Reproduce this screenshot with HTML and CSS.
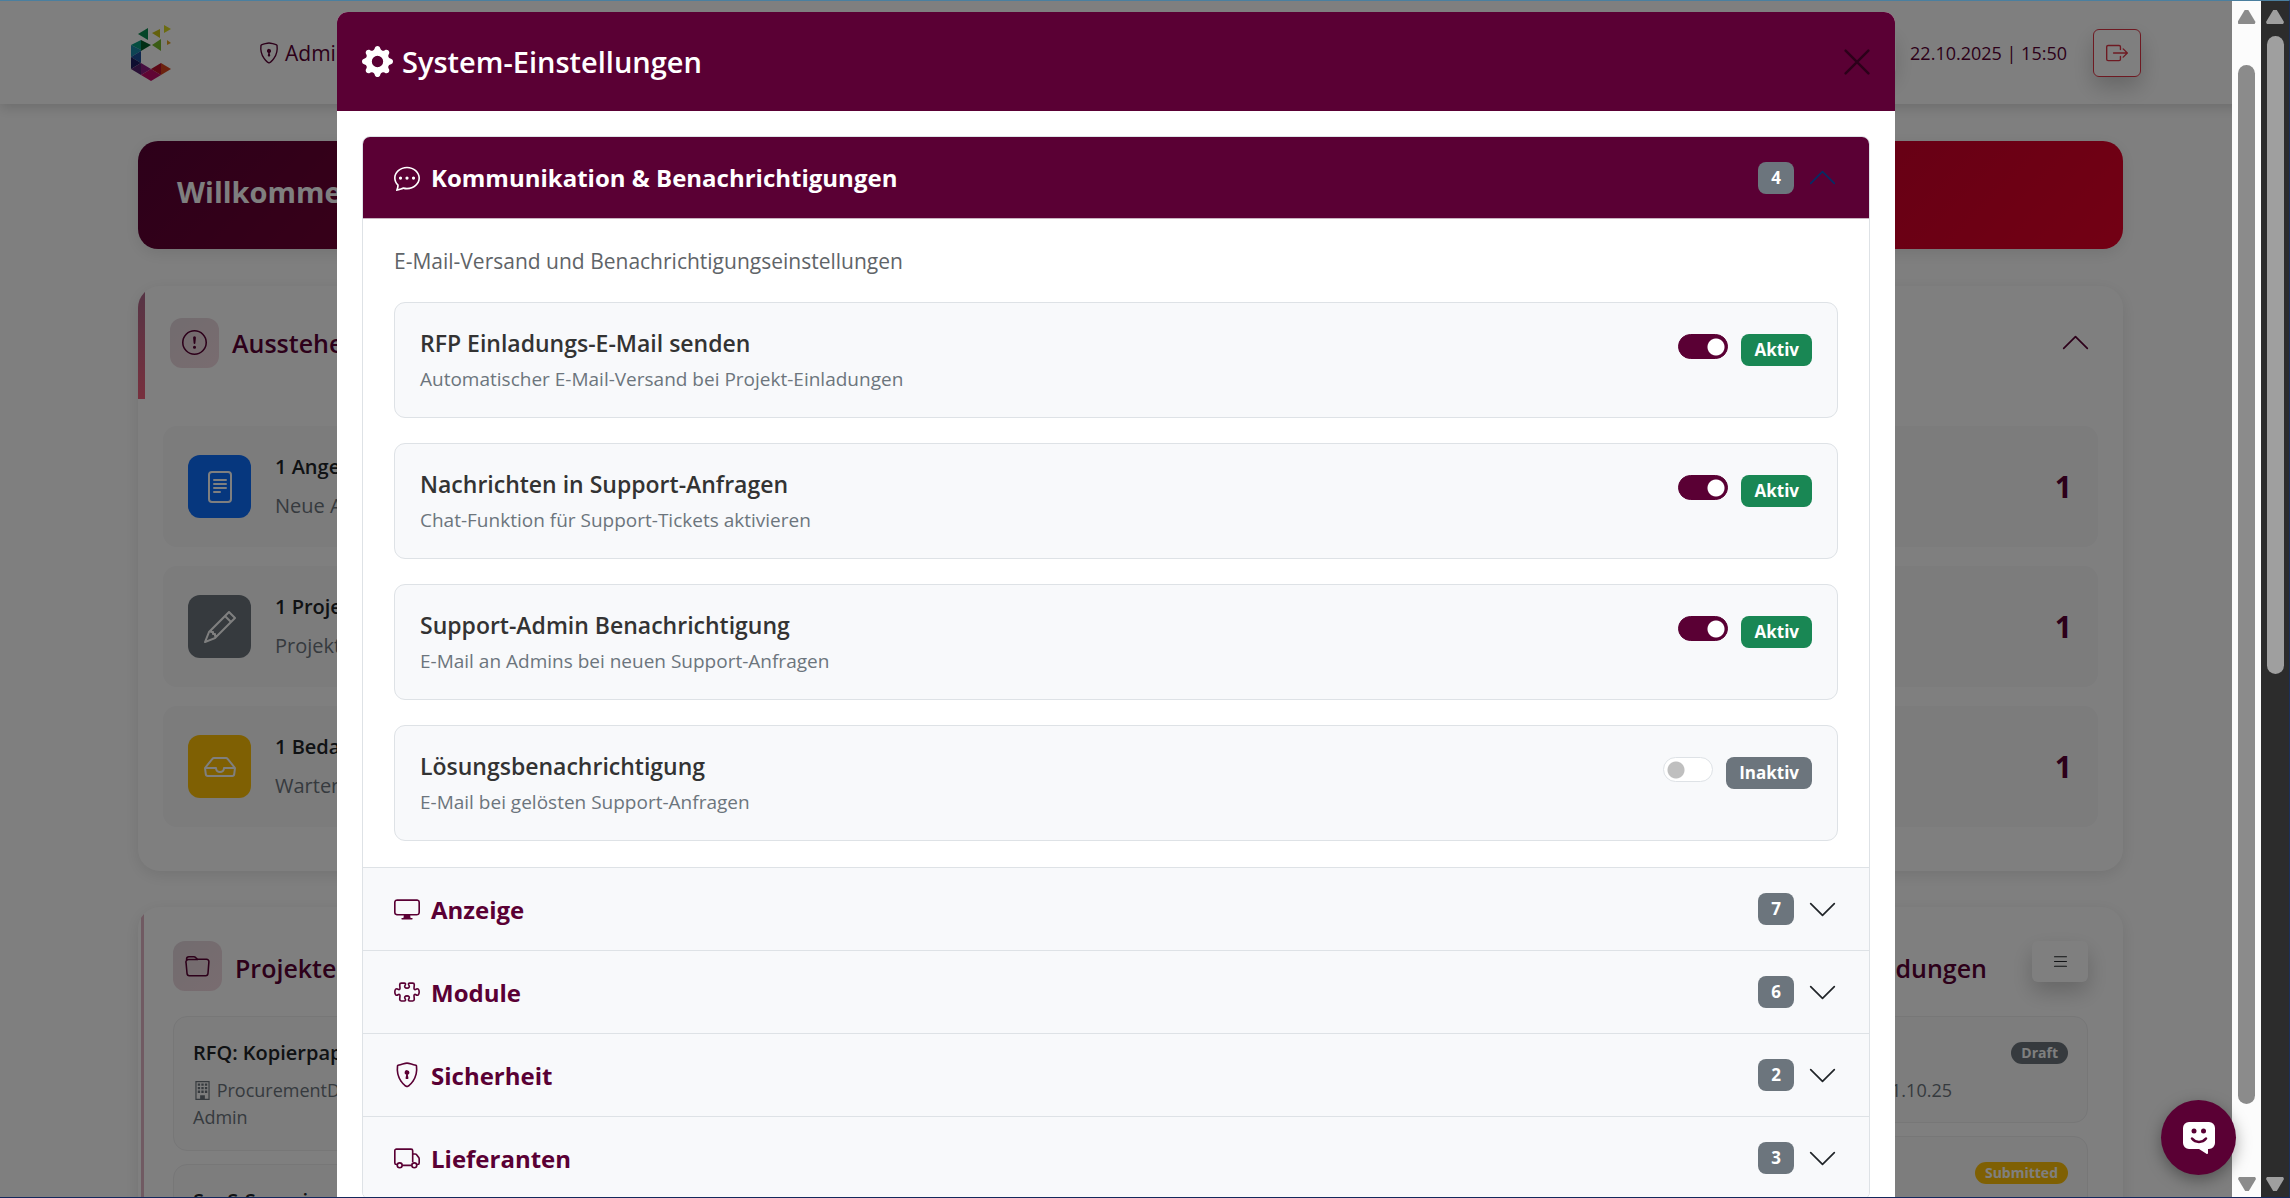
FILE: index.html
```
<!DOCTYPE html>
<html lang="de">
<head>
    <meta charset="UTF-8">
    <title>System-Einstellungen</title>
    <link rel="stylesheet" href="styles.css">
</head>
<body>
    <svg class="icon-defs" aria-hidden="true">
        <symbol id="shield-lock" viewBox="0 0 16 16">
            <path fill="none" stroke="currentColor" d="M5.338 1.2a61 61 0 0 0-2.837.856.48.48 0 0 0-.328.39c-.554 4.157.726 7.4 2.253 9.5a10.7 10.7 0 0 0 2.287 2.5c.346.244.652.42.893.533q.18.085.394.143.2-.058.394-.143c.24-.113.547-.29.893-.533a10.7 10.7 0 0 0 2.287-2.5c1.527-2.1 2.807-5.343 2.253-9.5a.48.48 0 0 0-.328-.39c-.651-.213-1.75-.56-2.837-.855C9.552.9 8.531.7 8 .7c-.53 0-1.552.2-2.662.5z"/>
            <path d="M9.5 6.5a1.5 1.5 0 0 1-1 1.415l.385 1.99a.5.5 0 0 1-.491.595h-.788a.5.5 0 0 1-.49-.595l.384-1.99a1.5 1.5 0 1 1 2-1.415"/>
        </symbol>
        <symbol id="chevron" viewBox="0 0 16 16">
            <path fill="none" stroke="currentColor" stroke-linecap="round" stroke-linejoin="round" d="m1 4.500 7 7 7-7"/>
        </symbol>
    </svg>

    <div class="browser">
        <div class="page-area">
            <div class="page">
                <header class="navbar">
                    <svg class="logo" viewBox="0 0 40 56">
                        <path fill="#0b8a50" d="M7 9 17 3v12z"/>
                        <path fill="#c9c21a" d="m21 8 8-4v9z"/>
                        <path fill="#d8d820" d="M33 0v8l7-4z"/>
                        <path fill="#e0a020" d="M36 15v5l4-2z"/>
                        <path fill="#76b82a" d="m21 20 9-6v12z"/>
                        <path fill="#0a9a80" d="m0 20 10-5v10z"/>
                        <path fill="#005c28" d="m10 15 10 5-10 6z"/>
                        <path fill="#1a88a8" d="M0 20v12l10-6v-1z"/>
                        <path fill="#1c4f98" d="m0 32 10-6v12z"/>
                        <path fill="#1c1c60" d="M0 32v12l10-6z"/>
                        <path fill="#54206c" d="m0 44 10-6v12z"/>
                        <path fill="#8c1c80" d="m10 38 10 6-10 6z"/>
                        <path fill="#c00a68" d="m10 50 10-6 10 6-10 6z"/>
                        <path fill="#b8102c" d="m20 44 10-6v12z"/>
                        <path fill="#d8451c" d="m30 38 10 6-10 6z"/>
                    </svg>
                    <a class="nav-link" href="#"><svg class="icon-sm"><use href="#shield-lock"/></svg>Admin</a>
                    <span class="nav-user"></span>
                    <span class="nav-date">22.10.2025 | 15:50</span>
                    <button class="logout" aria-label="Abmelden">
                        <svg viewBox="0 0 16 16"><path d="M10 12.5a.5.5 0 0 1-.5.5h-8a.5.5 0 0 1-.5-.5v-9a.5.5 0 0 1 .5-.5h8a.5.5 0 0 1 .5.5v2a.5.5 0 0 0 1 0v-2A1.5 1.5 0 0 0 9.500 2h-8A1.500 1.500 0 0 0 0 3.500v9A1.500 1.500 0 0 0 1.500 14h8a1.500 1.500 0 0 0 1.500-1.500v-2a.5.5 0 0 0-1 0z"/><path d="M15.854 8.354a.5.5 0 0 0 0-.708l-3-3a.5.5 0 0 0-.708.708L14.293 7.500H5.500a.5.5 0 0 0 0 1h8.793l-2.147 2.146a.5.5 0 0 0 .708.708z"/></svg>
                    </button>
                </header>

                <main class="content">
                    <section class="welcome"><h1>Willkommen</h1></section>

                    <section class="card pending">
                        <div class="pending-header">
                            <span class="tile tile-light">
                                <svg viewBox="0 0 16 16"><circle cx="8" cy="8" r="7.500" fill="none" stroke="currentColor"/><path d="M7.002 11a1 1 0 1 1 2 0 1 1 0 0 1-2 0M7.100 4.995a.905.905 0 1 1 1.800 0l-.35 3.507a.552.552 0 0 1-1.100 0z"/></svg>
                            </span>
                            <h2>Ausstehende</h2>
                            <svg class="chevron up push"><use href="#chevron"/></svg>
                        </div>
                        <div class="pending-list">
                            <div class="pending-item">
                                <span class="tile tile-blue">
                                    <svg viewBox="0 0 16 16"><rect x="2.500" y=".5" width="11" height="15" rx="1.500" fill="none" stroke="currentColor"/><path stroke="currentColor" stroke-linecap="round" d="M5 4.500h6M5 6.500h6M5 8.500h6M5 10.500h3"/></svg>
                                </span>
                                <div><h3>1 Angebot</h3><p>Neue Angebote</p></div>
                                <strong>1</strong>
                            </div>
                            <div class="pending-item">
                                <span class="tile tile-gray">
                                    <svg viewBox="0 0 16 16"><path d="M12.146.146a.5.5 0 0 1 .708 0l3 3a.5.5 0 0 1 0 .708l-10 10a.5.5 0 0 1-.168.11l-5 2a.5.5 0 0 1-.65-.65l2-5a.5.5 0 0 1 .11-.168zM11.207 2.500 13.500 4.793 14.793 3.500 12.500 1.207zm1.586 3L10.500 3.207 4 9.707V10h.5a.5.5 0 0 1 .5.5v.5h.5a.5.5 0 0 1 .5.5v.5h.293zm-9.761 5.175-.106.106-1.528 3.821 3.821-1.528.106-.106A.5.5 0 0 1 5 12.500V12h-.5a.5.5 0 0 1-.5-.5V11h-.5a.5.5 0 0 1-.468-.325"/></svg>
                                </span>
                                <div><h3>1 Projekt</h3><p>Projekte</p></div>
                                <strong>1</strong>
                            </div>
                            <div class="pending-item">
                                <span class="tile tile-yellow">
                                    <svg viewBox="0 0 16 16"><path d="M4.980 4a.5.5 0 0 0-.39.188L1.540 8H6a.5.5 0 0 1 .5.5 1.500 1.500 0 1 0 3 0A.5.5 0 0 1 10 8h4.460l-3.050-3.812A.5.5 0 0 0 11.020 4zm9.954 5H10.450a2.500 2.500 0 0 1-4.900 0H1.066l.32 2.562a.5.5 0 0 0 .497.438h12.234a.5.5 0 0 0 .496-.438zM3.809 3.563A1.500 1.500 0 0 1 4.981 3h6.038a1.500 1.500 0 0 1 1.172.563l3.700 4.625a.5.5 0 0 1 .105.374l-.39 3.124A1.500 1.500 0 0 1 14.117 13H1.883a1.500 1.500 0 0 1-1.489-1.314l-.39-3.124a.5.5 0 0 1 .106-.374z"/></svg>
                                </span>
                                <div><h3>1 Bedarf</h3><p>Wartend</p></div>
                                <strong>1</strong>
                            </div>
                        </div>
                    </section>

                    <div class="columns">
                        <section class="card projects">
                            <div class="column-header">
                                <span class="tile tile-light">
                                    <svg viewBox="0 0 16 16"><path fill="none" stroke="currentColor" d="M1.100 4.500 1 3.200A1.500 1.500 0 0 1 2.500 1.700h3.200a1.500 1.500 0 0 1 1.100.5l.7.700a1.500 1.500 0 0 0 1.100.500h5.200a1.500 1.500 0 0 1 1.500 1.600l-.6 7.500a1.500 1.500 0 0 1-1.500 1.400H2.800a1.500 1.500 0 0 1-1.500-1.400L.7 5.800a1.700 1.700 0 0 1 1.600-2.300h6"/></svg>
                                </span>
                                <h2>Projekte</h2>
                            </div>
                            <div class="entry">
                                <h3>RFQ: Kopierpapier</h3>
                                <p><svg class="icon-xs" viewBox="0 0 16 16"><path fill="none" stroke="currentColor" d="M2.500.5h11v15h-11z"/><path d="M4 2h2v2H4zm3 0h2v2H7zm3 0h2v2h-2zM4 5h2v2H4zm3 0h2v2H7zm3 0h2v2h-2zM4 8h2v2H4zm3 0h2v2H7zm3 0h2v2h-2zM6 12h4v4H6z"/></svg> ProcurementD<br>Admin</p>
                            </div>
                            <div class="entry">
                                <h3>SaaS-Scanni</h3>
                            </div>
                        </section>
                        <section class="card invitations">
                            <div class="column-header">
                                <h2>Einladungen</h2>
                                <button class="menu-button" aria-label="Menü">
                                    <svg viewBox="0 0 16 16"><path stroke="currentColor" stroke-linecap="round" d="M3 4h10M3 8h10M3 12h10"/></svg>
                                </button>
                            </div>
                            <div class="entry entry-status">
                                <span class="pill pill-gray">Draft</span>
                                <p>21.10.25</p>
                            </div>
                            <div class="entry entry-status">
                                <span class="pill pill-yellow">Submitted</span>
                            </div>
                        </section>
                    </div>
                </main>
            </div>

            <div class="overlay">
                <div class="backdrop">
                    <div class="modal" role="dialog" aria-labelledby="modal-title">
                        <div class="modal-header">
                            <svg class="gear" viewBox="0 0 16 16"><path d="M9.405 1.050c-.413-1.400-2.397-1.400-2.810 0l-.1.34a1.464 1.464 0 0 1-2.105.872l-.31-.17c-1.283-.698-2.686.705-1.987 1.987l.169.311c.446.82.023 1.841-.872 2.105l-.34.1c-1.400.413-1.400 2.397 0 2.810l.34.1a1.464 1.464 0 0 1 .872 2.105l-.17.31c-.698 1.283.705 2.686 1.987 1.987l.311-.169a1.464 1.464 0 0 1 2.105.872l.1.34c.413 1.400 2.397 1.400 2.810 0l.1-.34a1.464 1.464 0 0 1 2.105-.872l.31.17c1.283.698 2.686-.705 1.987-1.987l-.169-.311a1.464 1.464 0 0 1 .872-2.105l.34-.1c1.400-.413 1.400-2.397 0-2.810l-.34-.1a1.464 1.464 0 0 1-.872-2.105l.17-.31c.698-1.283-.705-2.686-1.987-1.987l-.311.169a1.464 1.464 0 0 1-2.105-.872zM8 10.930a2.929 2.929 0 1 1 0-5.860 2.929 2.929 0 0 1 0 5.858z"/></svg>
                            <h2 id="modal-title">System-Einstellungen</h2>
                            <button class="close" aria-label="Schließen">
                                <svg viewBox="0 0 16 16"><path stroke="currentColor" stroke-width="1.500" stroke-linecap="round" d="m1 1 14 14M15 1 1 15"/></svg>
                            </button>
                        </div>
                        <div class="modal-body">
                            <div class="accordion">
                                <button class="accordion-button open">
                                    <svg class="icon" viewBox="0 0 16 16"><path d="M5 8a1 1 0 1 1-2 0 1 1 0 0 1 2 0m4 0a1 1 0 1 1-2 0 1 1 0 0 1 2 0m3 1a1 1 0 1 0 0-2 1 1 0 0 0 0 2"/><path d="m2.165 15.803.02-.004c1.830-.363 2.948-.842 3.468-1.105A9 9 0 0 0 8 15c4.418 0 8-3.134 8-7s-3.582-7-8-7-8 3.134-8 7c0 1.760.743 3.370 1.970 4.600a10.400 10.400 0 0 1-.524 2.318l-.003.011a11 11 0 0 1-.244.637c-.079.186.074.394.273.362a22 22 0 0 0 .693-.125m.8-3.108a1 1 0 0 0-.287-.801C1.618 10.830 1 9.468 1 8c0-3.192 3.004-6 7-6s7 2.808 7 6-3.004 6-7 6a8 8 0 0 1-2.088-.272 1 1 0 0 0-.711.074c-.387.196-1.240.57-2.634.893a11 11 0 0 0 .398-2"/></svg>
                                    <span>Kommunikation &amp; Benachrichtigungen</span>
                                    <span class="badge">4</span>
                                    <svg class="chevron up"><use href="#chevron"/></svg>
                                </button>
                                <div class="accordion-body">
                                    <p class="intro">E-Mail-Versand und Benachrichtigungseinstellungen</p>
                                    <div class="setting">
                                        <div class="setting-text">
                                            <label for="rfp-mail">RFP Einladungs-E-Mail senden</label>
                                            <p>Automatischer E-Mail-Versand bei Projekt-Einladungen</p>
                                        </div>
                                        <input class="switch" id="rfp-mail" type="checkbox" checked>
                                        <span class="badge badge-active">Aktiv</span>
                                    </div>
                                    <div class="setting">
                                        <div class="setting-text">
                                            <label for="support-chat">Nachrichten in Support-Anfragen</label>
                                            <p>Chat-Funktion für Support-Tickets aktivieren</p>
                                        </div>
                                        <input class="switch" id="support-chat" type="checkbox" checked>
                                        <span class="badge badge-active">Aktiv</span>
                                    </div>
                                    <div class="setting">
                                        <div class="setting-text">
                                            <label for="support-admin">Support-Admin Benachrichtigung</label>
                                            <p>E-Mail an Admins bei neuen Support-Anfragen</p>
                                        </div>
                                        <input class="switch" id="support-admin" type="checkbox" checked>
                                        <span class="badge badge-active">Aktiv</span>
                                    </div>
                                    <div class="setting">
                                        <div class="setting-text">
                                            <label for="solution-mail">Lösungsbenachrichtigung</label>
                                            <p>E-Mail bei gelösten Support-Anfragen</p>
                                        </div>
                                        <input class="switch" id="solution-mail" type="checkbox">
                                        <span class="badge">Inaktiv</span>
                                    </div>
                                </div>
                                <button class="accordion-button">
                                    <svg class="icon" viewBox="0 0 16 16"><path d="M0 4s0-2 2-2h12s2 0 2 2v6s0 2-2 2h-4q0 1 .25 1.500H11a.5.5 0 0 1 0 1H5a.5.5 0 0 1 0-1h.75Q6 13 6 12H2s-2 0-2-2zm1.398-.855a.76.76 0 0 0-.254.302A1.500 1.500 0 0 0 1 4.010V10c0 .325.078.502.145.602q.105.156.302.254a1.500 1.500 0 0 0 .538.143L2.010 11H14c.325 0 .502-.078.602-.145a.76.76 0 0 0 .254-.302 1.500 1.500 0 0 0 .143-.538L15 9.990V4c0-.325-.078-.502-.145-.602a.76.76 0 0 0-.302-.254A1.500 1.500 0 0 0 13.990 3H2c-.325 0-.502.078-.602.145"/></svg>
                                    <span>Anzeige</span>
                                    <span class="badge">7</span>
                                    <svg class="chevron"><use href="#chevron"/></svg>
                                </button>
                                <button class="accordion-button">
                                    <svg class="icon" viewBox="0 0 16 16"><path fill="none" stroke="currentColor" d="M6.300 2.500H4.500a1 1 0 0 0-1 1l.2 2.200c0 .8-.6 1-1.200.6C1.400 5.500.5 6.400.5 8s.9 2.500 2 1.700c.6-.4 1.200-.2 1.200.6l-.2 2.200a1 1 0 0 0 1 1h1.800c.8 0 1-.6.6-1.200C6.100 11.200 6.800 10.400 8 10.400s1.900.8 1.100 1.900c-.4.6-.2 1.200.6 1.200h1.800a1 1 0 0 0 1-1l-.2-2.200c0-.8.6-1 1.200-.6 1.100.8 2-.1 2-1.700s-.9-2.500-2-1.700c-.6.4-1.200.2-1.200-.6l.2-2.200a1 1 0 0 0-1-1H9.700c-.8 0-1 .6-.6 1.200C9.900 4.800 9.200 5.600 8 5.600S6.100 4.800 6.900 3.700c.4-.6.2-1.200-.6-1.200z"/></svg>
                                    <span>Module</span>
                                    <span class="badge">6</span>
                                    <svg class="chevron"><use href="#chevron"/></svg>
                                </button>
                                <button class="accordion-button">
                                    <svg class="icon"><use href="#shield-lock"/></svg>
                                    <span>Sicherheit</span>
                                    <span class="badge">2</span>
                                    <svg class="chevron"><use href="#chevron"/></svg>
                                </button>
                                <button class="accordion-button">
                                    <svg class="icon" viewBox="0 0 16 16"><g fill="none" stroke="currentColor"><path d="M2 12h-.5a1 1 0 0 1-1-1V3.500a1 1 0 0 1 1-1h9a1 1 0 0 1 1 1v7M5 12.500h6M11.500 5.500H13a1 1 0 0 1 .8.4l1.500 1.900.2.700V11a1 1 0 0 1-1 1H14"/><circle cx="3.500" cy="12.500" r="1.500"/><circle cx="12.500" cy="12.500" r="1.500"/></g></svg>
                                    <span>Lieferanten</span>
                                    <span class="badge">3</span>
                                    <svg class="chevron"><use href="#chevron"/></svg>
                                </button>
                            </div>
                        </div>
                    </div>
                </div>
                <div class="scrollbar scrollbar-light">
                    <i class="arrow"></i><i class="thumb"></i><i class="arrow down"></i>
                </div>
            </div>

            <button class="chat-button" aria-label="Chat">
                <svg viewBox="0 0 32 32"><path fill="#fff" d="M6 0h20a6 6 0 0 1 6 6v15a6 6 0 0 1-6 6h-1v4a1 1 0 0 1-1.600.8L16 27H6a6 6 0 0 1-6-6V6a6 6 0 0 1 6-6z"/><circle cx="11" cy="9" r="2.500"/><circle cx="20.500" cy="9" r="2.500"/><path fill="none" stroke="currentColor" stroke-width="2.500" stroke-linecap="round" d="M9 16.500c3.500 4.500 10.500 4.500 14 0"/></svg>
            </button>
        </div>

        <div class="scrollbar scrollbar-dark">
            <i class="arrow"></i><i class="thumb"></i><i class="arrow down"></i>
        </div>
    </div>
</body>
</html>
```

FILE: styles.css
```
* {
    box-sizing: border-box;
}

body {
    margin: 0;
    overflow: hidden;
    background-color: #ffffff;
    color: #212529;
    font-family: "Segoe UI", "Open Sans", "Noto Sans", sans-serif;
    font-size: 20px;
    line-height: 32px;
}

h1, h2, h3, p {
    margin: 0;
    font-size: inherit;
}

button {
    font-family: inherit;
    cursor: pointer;
}

svg {
    display: block;
    flex: none;
    fill: currentColor;
}

.icon-defs {
    position: absolute;
    width: 0;
    height: 0;
}

.browser {
    display: flex;
    height: 100vh;
    overflow: hidden;
    border-top: 1px solid #4a7f9f;
    border-right: 1px solid #1c2f5c;
    border-bottom: 1px solid #14285c;
}

.page-area {
    position: relative;
    flex: 1;
    min-width: 0;
    overflow: hidden;
}

/* Header */
.navbar {
    display: flex;
    align-items: center;
    height: 103px;
    padding: 0 120px 0 131px;
    box-shadow: 0 4px 12px rgba(0, 0, 0, 0.15);
    color: #5a0034;
}

.logo {
    width: 40px;
    height: 56px;
}

.nav-link {
    display: flex;
    align-items: center;
    gap: 5px;
    margin-left: 87px;
    color: inherit;
    font-size: 21px;
    text-decoration: none;
}

.icon-sm {
    width: 22px;
    height: 22px;
}

.nav-user {
    width: 200px;
    height: 46px;
    margin-left: auto;
    border-radius: 8px;
    box-shadow: 0 8px 20px rgba(0, 0, 0, 0.15);
}

.nav-date {
    margin: 0 26px 0 14px;
    font-size: 18px;
}

.logout {
    width: 48px;
    height: 48px;
    padding: 12px;
    border: 1px solid #dc3545;
    border-radius: 6px;
    background: none;
    box-shadow: 0 10px 22px rgba(0, 0, 0, 0.2);
    color: #dc3545;
}

/* Dashboard */
.content {
    padding: 37px 138px 0;
}

.welcome {
    padding: 31px 39px 37px;
    border-radius: 20px;
    background: linear-gradient(135deg, #5a0034, #e60028);
    box-shadow: 0 4px 16px rgba(0, 0, 0, 0.1);
    color: #ffffff;
}

.welcome h1 {
    font-size: 29px;
    line-height: 40px;
}

.card {
    border-radius: 22px;
    box-shadow: 0 4px 16px rgba(0, 0, 0, 0.1);
    overflow: hidden;
}

.card h2 {
    color: #5a0034;
    font-size: 25px;
    font-weight: 600;
}

.pending {
    margin-top: 37px;
    padding-bottom: 44px;
}

.pending-header {
    display: flex;
    align-items: center;
    gap: 13px;
    height: 113px;
    padding: 0 34px 0 25px;
    border-left: 7px solid;
    border-image: linear-gradient(#a86a8c, #f0607c) 1;
    color: #5a0034;
}

.tile {
    display: flex;
    align-items: center;
    justify-content: center;
    flex: none;
    width: 63px;
    height: 63px;
    border-radius: 12px;
    color: #ffffff;
}

.tile svg {
    width: 32px;
    height: 32px;
}

.tile-light {
    width: 49px;
    height: 50px;
    background: linear-gradient(135deg, #e4d8de, #f2d8e0);
    color: #5a0034;
}

.tile-light svg {
    width: 25px;
    height: 25px;
}

.tile-blue {
    background-color: #0d6efd;
}

.tile-gray {
    background-color: #6c757d;
}

.tile-yellow {
    background-color: #ffc107;
}

.chevron {
    width: 27px;
    height: 27px;
}

.chevron.up {
    transform: rotate(180deg);
}

.push {
    margin-left: auto;
}

.pending-list {
    display: flex;
    flex-direction: column;
    gap: 19px;
    padding: 27px 25px 0;
}

.pending-item {
    display: flex;
    align-items: center;
    gap: 24px;
    height: 121px;
    padding: 0 26px 0 25px;
    border-radius: 14px;
    background-color: #f8f8f9;
}

.pending-item h3 {
    margin-bottom: 7px;
    font-size: 20px;
    font-weight: 600;
}

.pending-item p {
    color: #6c757d;
}

.pending-item strong {
    margin-left: auto;
    color: #5a0034;
    font-size: 30px;
}

.columns {
    display: flex;
    gap: 34px;
    margin-top: 36px;
}

.columns .card {
    flex: 1;
    height: 400px;
    padding: 34px 35px 0;
}

.projects {
    background: linear-gradient(#e0b4c4, #e0b4c4) 3px 0 / 3px 100% no-repeat;
}

.column-header {
    display: flex;
    align-items: center;
    gap: 13px;
    height: 50px;
    margin-bottom: 25px;
}

.column-header h2 {
    padding-top: 3px;
}

.invitations .column-header {
    justify-content: flex-end;
    gap: 45px;
}

.menu-button {
    display: flex;
    align-items: center;
    justify-content: center;
    align-self: flex-start;
    width: 56px;
    height: 41px;
    border: 0;
    border-radius: 6px;
    background-color: #ffffff;
    box-shadow: 0 10px 22px rgba(0, 0, 0, 0.2);
    color: #212529;
}

.menu-button svg {
    width: 19px;
    height: 19px;
}

.entry {
    height: 135px;
    margin-bottom: 13px;
    padding: 20px 19px;
    border: 1px solid #eeeeef;
    border-radius: 14px;
    background-color: #fafafa;
}

.entry h3 {
    font-size: 20px;
    font-weight: 600;
}

.entry p {
    margin-top: 8px;
    color: #6c757d;
    font-size: 18px;
    line-height: 27px;
}

.icon-xs {
    display: inline-block;
    width: 19px;
    height: 19px;
    vertical-align: -3px;
}

.entry-status {
    display: flex;
    flex-direction: column;
    align-items: flex-end;
    height: 107px;
    padding-top: 25px;
}

.entry-status p {
    margin: 13px 116px 0 0;
}

.pill {
    padding: 0 10px;
    border-radius: 11px;
    color: #ffffff;
    font-size: 14px;
    font-weight: 700;
    line-height: 22px;
}

.pill-gray {
    background-color: #6c757d;
}

.pill-yellow {
    background-color: #ffc107;
}

/* Modal */
.overlay {
    position: absolute;
    inset: 0;
    display: flex;
}

.backdrop {
    flex: 1;
    padding-top: 11px;
    background-color: rgba(0, 0, 0, 0.5);
    overflow: hidden;
}

.modal {
    width: 70%;
    max-width: 1558px;
    margin: 0 auto;
    border-radius: 11px 11px 0 0;
    background-color: #ffffff;
    overflow: hidden;
}

.modal-header {
    display: flex;
    align-items: center;
    gap: 9px;
    height: 99px;
    padding: 0 25px;
    background-color: #5a0034;
    color: #ffffff;
}

.modal-header h2 {
    font-size: 29px;
    font-weight: 600;
}

.gear {
    width: 31px;
    height: 31px;
}

.close {
    margin-left: auto;
    padding: 0;
    border: 0;
    background: none;
    color: #2c001a;
}

.close svg {
    width: 26px;
    height: 26px;
}

.modal-body {
    padding: 25px 25px 24px;
}

.accordion {
    border: 1px solid #dee2e6;
    border-radius: 8px;
    overflow: hidden;
}

.accordion-button {
    display: flex;
    align-items: center;
    gap: 11px;
    width: 100%;
    height: 83px;
    padding: 0 33px 0 31px;
    border: 0;
    border-top: 1px solid #dee2e6;
    background-color: #f8f9fb;
    color: #5a0034;
    font-size: 24px;
    font-weight: 700;
}

.accordion-button.open {
    height: 82px;
    border-top: 0;
    border-bottom: 1px solid #c9b3c0;
    background-color: #5a0034;
    color: #ffffff;
}

.accordion-button .badge {
    margin: 0 4px 0 auto;
}

.accordion-button .chevron {
    color: #212529;
}

.accordion-button.open .chevron {
    color: #052c65;
}

.icon {
    width: 26px;
    height: 26px;
}

.badge {
    padding: 0 13px;
    border-radius: 8px;
    background-color: #6c757d;
    color: #ffffff;
    font-size: 17px;
    font-weight: 700;
    line-height: 32px;
}

.badge-active {
    background-color: #198754;
}

.accordion-body {
    display: flex;
    flex-direction: column;
    gap: 25px;
    padding: 26px 31px 26px;
}

.intro {
    color: #5f6468;
    font-size: 21px;
}

.setting {
    display: flex;
    align-items: flex-start;
    gap: 13px;
    height: 116px;
    padding: 24px 25px 0;
    border: 1px solid #dee2e6;
    border-radius: 11px;
    background-color: #f8f9fb;
}

.setting-text {
    flex: 1;
}

.setting-text label {
    color: #333333;
    font-size: 23px;
    font-weight: 600;
}

.setting-text p {
    margin-top: 2px;
    color: #6c757d;
    font-size: 19px;
}

.setting .badge {
    margin-top: 7px;
}

.switch {
    width: 50px;
    height: 25px;
    margin: 7px 0 0;
    border: 1px solid #dee2e6;
    border-radius: 13px;
    background: #ffffff radial-gradient(circle at 12px 12px, #bfbfbf 8px, transparent 9px);
    appearance: none;
}

.switch:checked {
    border-color: #5a0034;
    background: #5a0034 radial-gradient(circle at 37px 12px, #ffffff 8px, transparent 9px);
}

/* Scrollbars */
.scrollbar {
    display: flex;
    flex-direction: column;
    align-items: center;
    flex: none;
    padding: 9px 0 6px;
}

.scrollbar-light {
    width: 29px;
    background-color: #fcfcfc;
    color: #8b8b8b;
}

.scrollbar-dark {
    width: 28px;
    background-color: #2c2c2c;
    color: #9f9f9f;
}

.arrow {
    width: 18px;
    height: 14px;
    background-color: currentColor;
    clip-path: polygon(40% 0, 60% 0, 100% 85%, 95% 100%, 5% 100%, 0 85%);
}

.arrow.down {
    margin-top: auto;
    transform: rotate(180deg);
}

.thumb {
    width: 17px;
    height: 88%;
    margin-top: 41px;
    border-radius: 9px;
    background-color: currentColor;
}

.scrollbar-dark .thumb {
    height: 54%;
    margin-top: 12px;
}

.chat-button {
    position: absolute;
    right: 25px;
    bottom: 22px;
    width: 75px;
    height: 75px;
    padding: 0;
    border: 0;
    border-radius: 50%;
    background-color: #5a0034;
    box-shadow: 0 5px 16px rgba(0, 0, 0, 0.35);
    color: #5a0034;
}

.chat-button svg {
    width: 32px;
    height: 32px;
    margin: 0 auto;
}
```
